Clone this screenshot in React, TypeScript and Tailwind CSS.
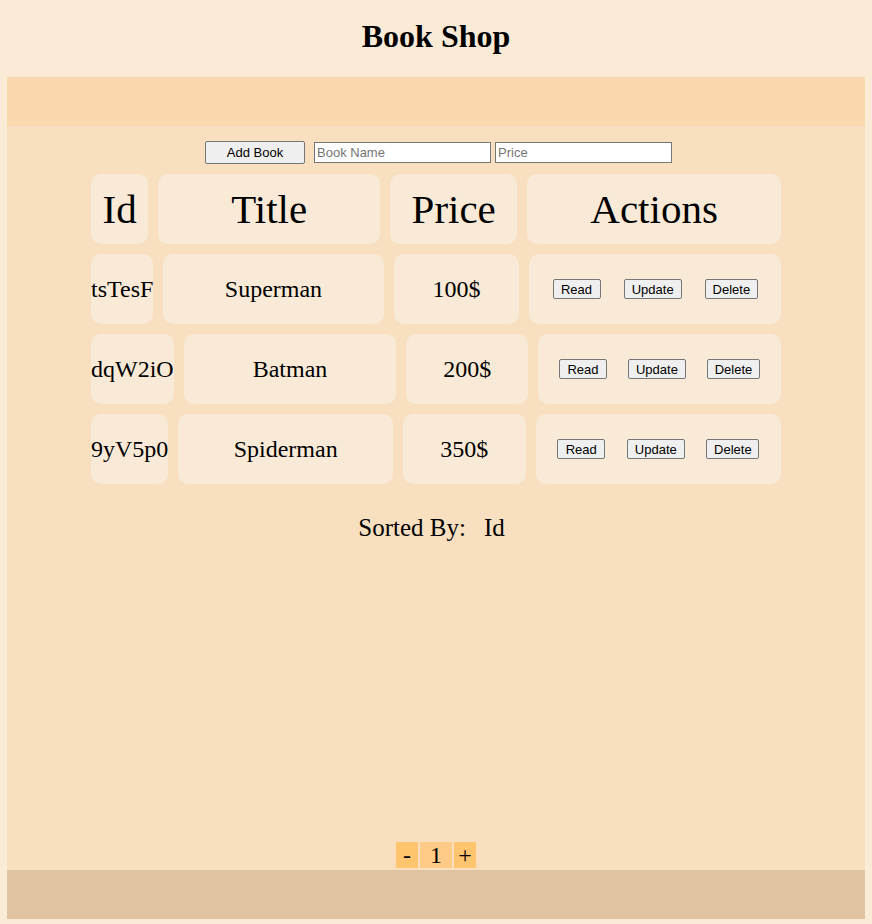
import { useState } from "react";

type Book = { id: string; title: string; price: number };

const books: Book[] = [
  { id: "tsTesF", title: "Superman", price: 100 },
  { id: "dqW2iO", title: "Batman", price: 200 },
  { id: "9yV5p0", title: "Spiderman", price: 350 },
];

const cell = "flex items-center justify-center rounded-[10px] bg-[#f8ead6]";
const btn =
  "h-[20px] rounded-[2px] border border-[#767676] bg-[#efefef] font-['Liberation_Sans',Arial,sans-serif] text-[13px] leading-none text-black";

export default function App() {
  const [page, setPage] = useState(1);

  return (
    <div className="min-h-screen bg-[#faebd7] px-[7px] pb-[5px] font-['Liberation_Serif',serif] text-black">
      <h1 className="h-[77px] pt-[18px] text-center text-[32px] font-bold leading-[normal]">
        Book Shop
      </h1>
      <div className="h-[49px] bg-[#f9d8ae]" />

      <main className="flex h-[744px] flex-col bg-[#f8dfbf]">
        {/* add book form */}
        <div className="mt-[15px] flex items-center justify-center pl-[5px] font-['Liberation_Sans',Arial,sans-serif] text-[13px]">
          <button className="mr-[9px] h-[23px] w-[100px] rounded-[2px] border border-[#767676] bg-[#efefef]">
            Add Book
          </button>
          <input
            placeholder="Book Name"
            className="mr-[4px] h-[21px] w-[177px] border border-[#767676] bg-white px-[2px] placeholder:text-[#757575]"
          />
          <input
            placeholder="Price"
            className="h-[21px] w-[177px] border border-[#767676] bg-white px-[2px] placeholder:text-[#757575]"
          />
        </div>

        {/* table */}
        <div className="mx-auto mt-[10px] flex w-[690px] flex-col gap-[10px]">
          <div className="flex h-[70px] gap-[10px] text-[41px] leading-[normal]">
            <div className={`${cell} flex-none px-[11.5px]`}>Id</div>
            <div className={`${cell} grow-[7] basis-0`}>Title</div>
            <div className={`${cell} grow-[4] basis-0`}>Price</div>
            <div className={`${cell} grow-[8] basis-0`}>Actions</div>
          </div>
          {books.map((b) => (
            <div key={b.id} className="flex h-[70px] gap-[10px] text-[24px] leading-[normal]">
              <div className={`${cell} flex-none`}>{b.id}</div>
              <div className={`${cell} grow-[7] basis-0`}>{b.title}</div>
              <div className={`${cell} grow-[4] basis-0`}>{b.price}$</div>
              <div className={`${cell} grow-[8] basis-0 justify-evenly`}>
                <button className={`${btn} w-[48px]`}>Read</button>
                <button className={`${btn} w-[58px]`}>Update</button>
                <button className={`${btn} w-[53px]`}>Delete</button>
              </div>
            </div>
          ))}
        </div>

        <div className="mt-[30px] flex justify-center gap-[18px] pr-[9px] text-[25px] leading-[normal]">
          <span>Sorted By:</span>
          <span>Id</span>
        </div>

        {/* pagination */}
        <div className="mt-auto mb-[2px] flex justify-center gap-[2px] text-[24px] leading-none">
          <button
            onClick={() => setPage((p) => Math.max(1, p - 1))}
            className="flex h-[26px] w-[22px] items-center justify-center bg-[#ffc46e]"
          >
            -
          </button>
          <span className="flex h-[26px] w-[32px] items-center justify-center bg-[#fdca88]">
            {page}
          </span>
          <button
            onClick={() => setPage((p) => p + 1)}
            className="flex h-[26px] w-[22px] items-center justify-center bg-[#ffc46e]"
          >
            +
          </button>
        </div>
      </main>

      <footer className="h-[49px] bg-[#e0c3a0]" />
    </div>
  );
}
